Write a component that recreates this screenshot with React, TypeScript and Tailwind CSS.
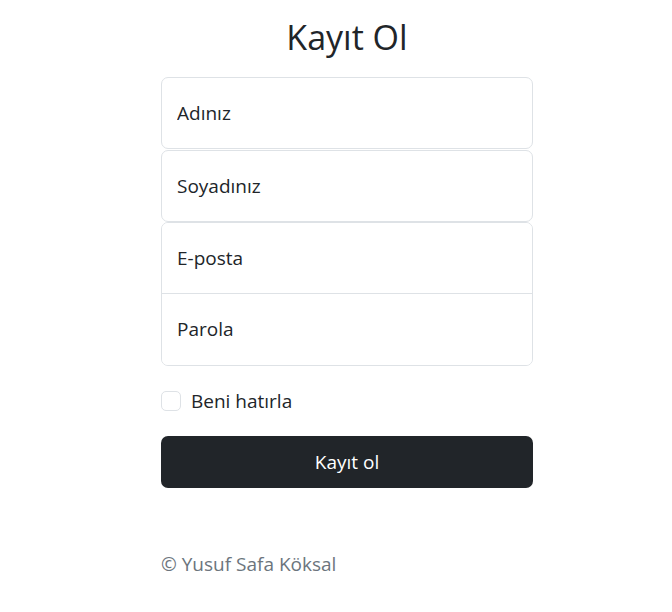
import React from 'react';

const fieldBase =
    'h-[72px] w-full border border-[#dee2e6] bg-white px-[15px] text-[19px] leading-[30px] text-[#212529] outline-none placeholder:text-[#212529]';

export default function App() {
    return (
        <div className="min-h-screen bg-white font-['Open_Sans','Noto_Sans',sans-serif] text-[#212529]">
            <main className="ml-[161px] w-[372px] pt-[17px]">
                <form onSubmit={(e) => e.preventDefault()}>
                    <h1 className="mb-[19px] text-center text-[34px] font-normal leading-[1.2]">Kayıt Ol</h1>

                    <input type="text" placeholder="Adınız" className={`${fieldBase} block rounded-[7px]`} />
                    <input type="text" placeholder="Soyadınız" className={`${fieldBase} mt-[1px] block rounded-[7px]`} />

                    <div className="overflow-hidden rounded-[7px] border border-[#dee2e6]">
                        <input
                            type="email"
                            placeholder="E-posta"
                            className="block h-[71px] w-full border-b border-[#dee2e6] bg-white px-[15px] text-[19px] leading-[30px] outline-none placeholder:text-[#212529]"
                        />
                        <input
                            type="password"
                            placeholder="Parola"
                            className="block h-[71px] w-full bg-white px-[15px] text-[19px] leading-[30px] outline-none placeholder:text-[#212529]"
                        />
                    </div>

                    <label className="mt-[20px] flex h-[30px] items-center gap-[10px] text-[19px]">
                        <input
                            type="checkbox"
                            className="h-[20px] w-[20px] appearance-none rounded-[5px] border border-[#dee2e6] bg-white"
                        />
                        <span>Beni hatırla</span>
                    </label>

                    <button
                        type="submit"
                        className="mt-[20px] h-[52px] w-full rounded-[7px] bg-[#212529] text-[19px] text-white"
                    >
                        Kayıt ol
                    </button>

                    <p className="mt-[61px] text-[19px] leading-[30px] text-[#6c757d]">© Yusuf Safa Köksal</p>
                </form>
            </main>
        </div>
    );
}
